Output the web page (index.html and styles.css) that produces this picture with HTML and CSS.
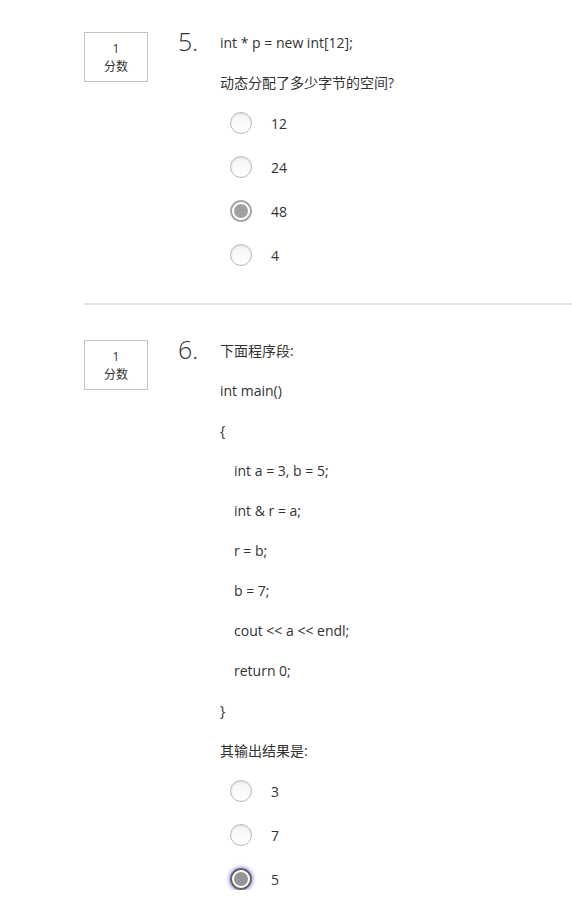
FILE: index.html
```html
<!DOCTYPE html>
<html lang="zh">
<head>
<meta charset="utf-8">
<link rel="stylesheet" href="styles.css">
</head>
<body>
<div class="page">
  <div class="question">
    <div class="points">1<br>分数</div>
    <div class="num">5.</div>
    <div class="body">
      <p class="line">int * p = new int[12];</p>
      <p class="line">动态分配了多少字节的空间?</p>
      <div class="options">
        <label class="opt"><span class="radio"></span><span class="lbl">12</span></label>
        <label class="opt"><span class="radio"></span><span class="lbl">24</span></label>
        <label class="opt"><span class="radio checked"></span><span class="lbl">48</span></label>
        <label class="opt"><span class="radio"></span><span class="lbl">4</span></label>
      </div>
    </div>
  </div>
  <hr class="divider">
  <div class="question">
    <div class="points">1<br>分数</div>
    <div class="num">6.</div>
    <div class="body">
      <p class="line">下面程序段:</p>
      <p class="line">int main()</p>
      <p class="line">{</p>
      <p class="line code">int a = 3, b = 5;</p>
      <p class="line code">int &amp; r = a;</p>
      <p class="line code">r = b;</p>
      <p class="line code">b = 7;</p>
      <p class="line code">cout &lt;&lt; a &lt;&lt; endl;</p>
      <p class="line code">return 0;</p>
      <p class="line">}</p>
      <p class="line">其输出结果是:</p>
      <div class="options">
        <label class="opt"><span class="radio"></span><span class="lbl">3</span></label>
        <label class="opt"><span class="radio"></span><span class="lbl">7</span></label>
        <label class="opt"><span class="radio checked focused"></span><span class="lbl">5</span></label>
      </div>
    </div>
  </div>
</div>
</body>
</html>
```
FILE: styles.css
```css
html, body {
  margin: 0;
  padding: 0;
  background: #fff;
}
body {
  font-family: "Open Sans", "Noto Sans CJK SC", sans-serif;
  font-size: 14px;
  color: #333;
}
.page {
  padding: 32px 0 0 84px;
}
.question {
  display: flex;
  align-items: flex-start;
}
.points {
  box-sizing: border-box;
  width: 64px;
  height: 50px;
  border: 1px solid #c4c4c4;
  text-align: center;
  font-size: 12px;
  line-height: 18px;
  padding-top: 7px;
  color: #333;
}
.num {
  margin-left: 30px;
  width: 42px;
  font-size: 25px;
  font-weight: 300;
  line-height: 22px;
  margin-top: -2px;
  color: #333;
}
.body {
  padding-top: 1px;
}
.line {
  margin: 0 0 20px 0;
  line-height: 20px;
  white-space: pre;
}
.code {
  padding-left: 14px;
}
.options {
  display: flex;
  flex-direction: column;
  gap: 22px;
  padding-left: 10px;
  margin-top: -1px;
}
.opt {
  display: flex;
  align-items: center;
  height: 22px;
}
.radio {
  box-sizing: border-box;
  width: 22px;
  height: 22px;
  border-radius: 50%;
  border: 1px solid #b8b8b8;
  background: linear-gradient(#f4f4f4, #ffffff);
  box-shadow: inset 0 1px 2px rgba(0,0,0,0.08);
  position: relative;
}
.radio.checked {
  border: 2px solid #a8a8a8;
  background: #fff;
  box-shadow: none;
}
.radio.checked::after {
  content: "";
  position: absolute;
  left: 2px;
  top: 2px;
  width: 14px;
  height: 14px;
  border-radius: 50%;
  background: #a0a0a0;
}
.radio.focused {
  border-color: #666;
  box-shadow: 0 0 3px 2px #bcbaf8;
}
.radio.focused::after {
  background: #959595;
}
.lbl {
  margin-left: 19px;
}
.divider {
  border: 0;
  height: 2px;
  background: #e2e2e2;
  margin: 37px 0 35px 0;
}
```
